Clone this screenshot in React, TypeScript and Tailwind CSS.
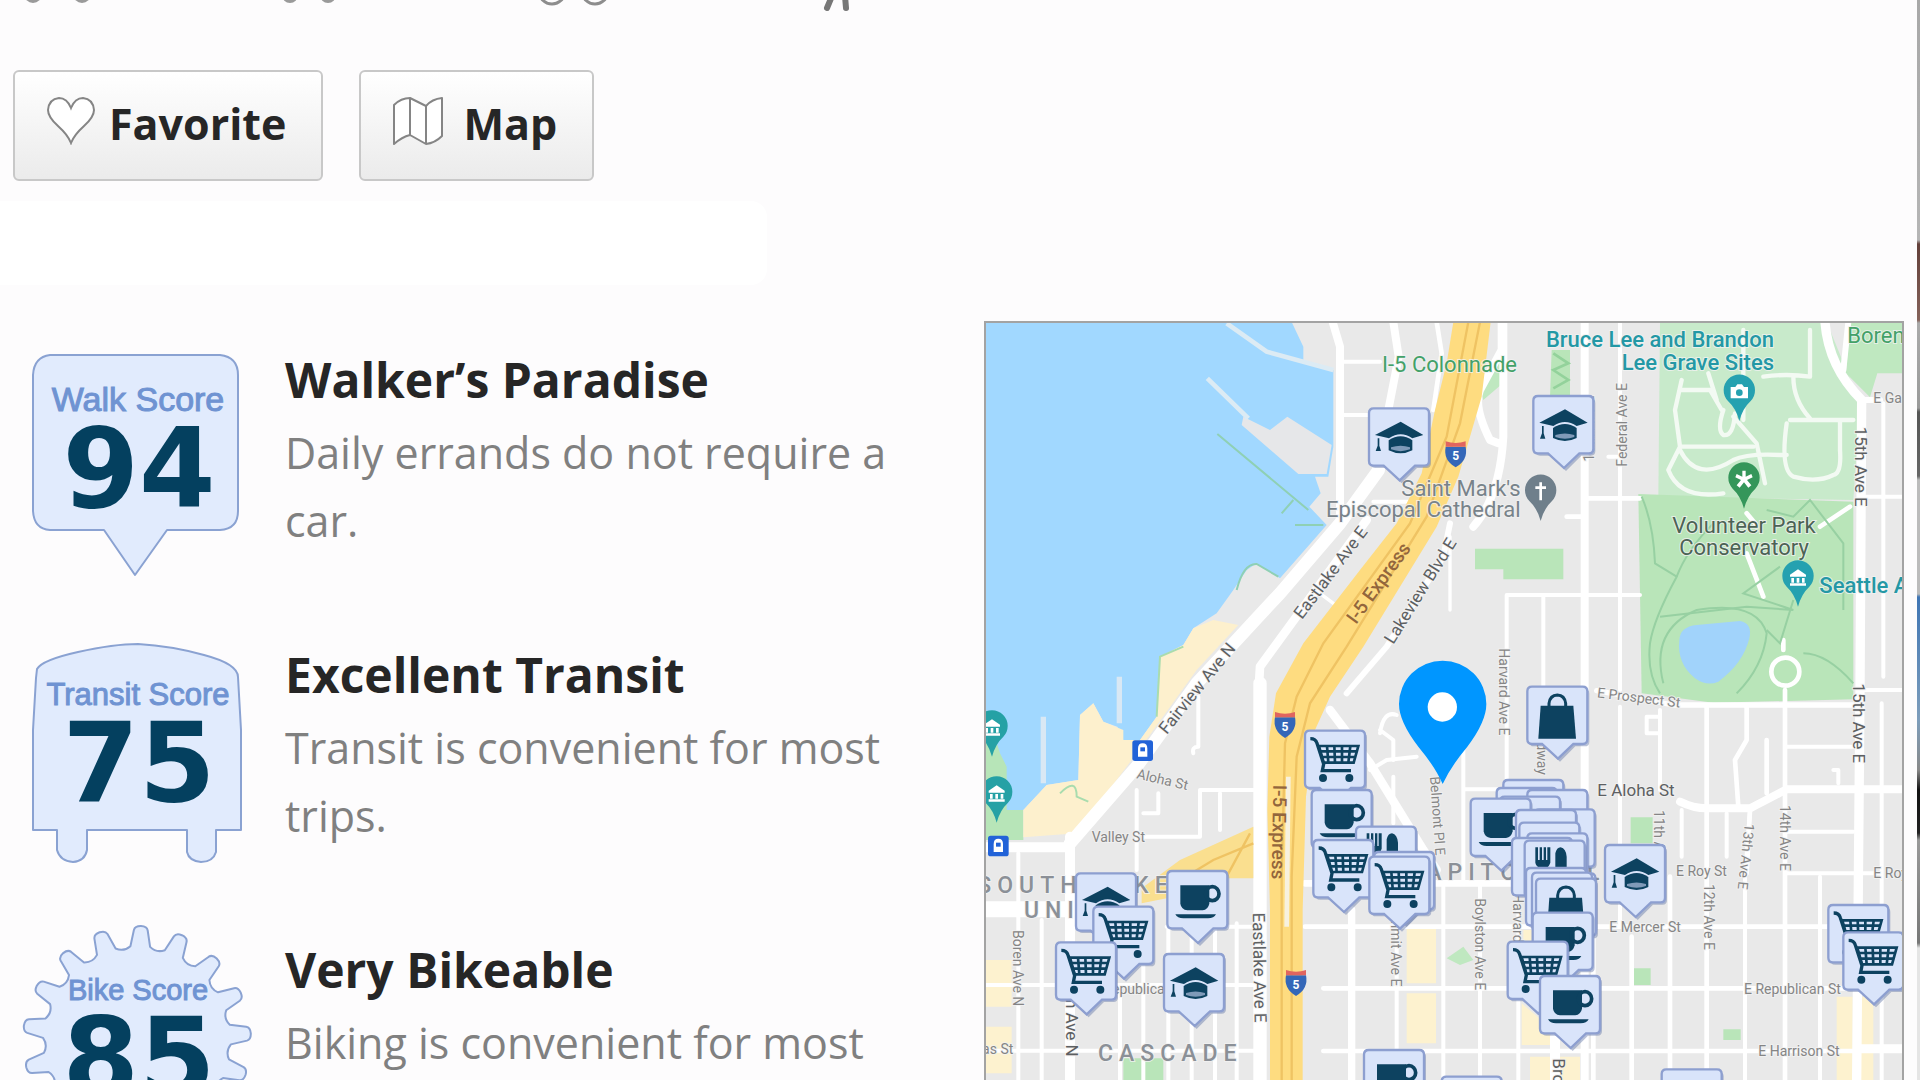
import type { ReactNode } from 'react';

type IconName = 'cap' | 'cart' | 'cup' | 'bag' | 'fork' | 'none';

interface Place {
  x: number;
  y: number;
  icon: IconName;
}

interface Label {
  text: string;
  x: number;
  y: number;
  rotate?: number;
  kind: 'street' | 'avenue' | 'place' | 'park' | 'teal' | 'church' | 'express';
  anchor?: 'start' | 'middle' | 'end';
}

// Map units: three to a pixel at the default width
const places: Place[] = [
  { x: 1167, y: 295, icon: 'cap' },
  { x: 1660, y: 258, icon: 'cap' },
  { x: 1642, y: 1130, icon: 'bag' },
  { x: 975, y: 1262, icon: 'cart' },
  { x: 995, y: 1440, icon: 'cup' },
  { x: 1128, y: 1550, icon: 'fork' },
  { x: 1000, y: 1590, icon: 'cart' },
  { x: 1182, y: 1626, icon: 'none' },
  { x: 1168, y: 1640, icon: 'cart' },
  { x: 288, y: 1690, icon: 'cap' },
  { x: 340, y: 1790, icon: 'cart' },
  { x: 228, y: 1897, icon: 'cart' },
  { x: 562, y: 1683, icon: 'cup' },
  { x: 552, y: 1932, icon: 'cap' },
  { x: 1570, y: 1410, icon: 'none' },
  { x: 1550, y: 1434, icon: 'none' },
  { x: 1642, y: 1440, icon: 'none' },
  { x: 1560, y: 1460, icon: 'none' },
  { x: 1664, y: 1498, icon: 'none' },
  { x: 1472, y: 1466, icon: 'cup' },
  { x: 1666, y: 1690, icon: 'none' },
  { x: 1608, y: 1500, icon: 'none' },
  { x: 1618, y: 1538, icon: 'none' },
  { x: 1642, y: 1570, icon: 'none' },
  { x: 1596, y: 1584, icon: 'none' },
  { x: 1634, y: 1592, icon: 'fork' },
  { x: 1638, y: 1674, icon: 'none' },
  { x: 1656, y: 1688, icon: 'none' },
  { x: 1668, y: 1706, icon: 'bag' },
  { x: 1658, y: 1808, icon: 'cup' },
  { x: 1583, y: 1895, icon: 'cart' },
  { x: 1680, y: 1998, icon: 'cup' },
  { x: 1875, y: 1605, icon: 'cap' },
  { x: 2545, y: 1785, icon: 'cart' },
  { x: 2590, y: 1867, icon: 'cart' },
  { x: 1152, y: 2220, icon: 'cup' },
  { x: 1385, y: 2300, icon: 'none' },
  { x: 2045, y: 2278, icon: 'none' },
];

const labels: Label[] = [
  { text: 'I-5 Colonnade', x: 1206, y: 185, kind: 'park' },
  { text: 'Bruce Lee and Brandon', x: 2382, y: 112, kind: 'teal', anchor: 'end' },
  { text: 'Lee Grave Sites', x: 2382, y: 180, kind: 'teal', anchor: 'end' },
  { text: 'Boren Park', x: 2602, y: 100, kind: 'park' },
  { text: "Saint Mark's", x: 1622, y: 557, kind: 'church', anchor: 'end' },
  { text: 'Episcopal Cathedral', x: 1622, y: 621, kind: 'church', anchor: 'end' },
  { text: 'Volunteer Park', x: 2292, y: 668, kind: 'place', anchor: 'middle' },
  { text: 'Conservatory', x: 2292, y: 735, kind: 'place', anchor: 'middle' },
  { text: 'Seattle Asian Art', x: 2518, y: 850, kind: 'teal' },
  { text: 'Eastlake Ave E', x: 966, y: 930, rotate: -53, kind: 'avenue' },
  { text: 'I-5 Express', x: 1128, y: 945, rotate: -54, kind: 'express' },
  { text: 'Lakeview Blvd E', x: 1240, y: 1005, rotate: -58, kind: 'avenue' },
  { text: 'Fairview Ave N', x: 560, y: 1275, rotate: -51, kind: 'avenue' },
  { text: 'I-5 Express', x: 880, y: 1424, rotate: 91, kind: 'express' },
  { text: 'Eastlake Ave E', x: 818, y: 1808, rotate: 89, kind: 'avenue' },
  { text: '9th Ave N', x: 258, y: 2240, rotate: 90, kind: 'avenue', anchor: 'end' },
  { text: 'Federal Ave E', x: 1940, y: 470, rotate: -90, kind: 'street' },
  { text: '10th Ave E', x: 1842, y: 455, rotate: -90, kind: 'street' },
  { text: '15th Ave E', x: 2625, y: 350, rotate: 90, kind: 'avenue' },
  { text: '15th Ave E', x: 2618, y: 1120, rotate: 90, kind: 'avenue' },
  { text: 'Harvard Ave E', x: 1558, y: 1015, rotate: 90, kind: 'street' },
  { text: 'Belmont Pl E', x: 1350, y: 1400, rotate: 86, kind: 'street' },
  { text: 'Broadway E', x: 1672, y: 1210, rotate: 90, kind: 'street' },
  { text: 'E Prospect St', x: 1850, y: 1162, rotate: 7, kind: 'street' },
  { text: 'E Aloha St', x: 1852, y: 1458, kind: 'avenue' },
  { text: 'Aloha St', x: 468, y: 1405, rotate: 13, kind: 'street' },
  { text: 'Valley St', x: 335, y: 1595, kind: 'street' },
  { text: 'Boren Ave N', x: 98, y: 1860, rotate: 90, kind: 'street' },
  { text: 'E Roy St', x: 2088, y: 1697, kind: 'street' },
  { text: 'E Mercer St', x: 1888, y: 1866, kind: 'street' },
  { text: 'E Republican St', x: 2292, y: 2052, kind: 'street' },
  { text: 'E Harrison St', x: 2335, y: 2238, kind: 'street' },
  { text: 'E Roy St', x: 2680, y: 1705, kind: 'street' },
  { text: 'E Garfield St', x: 2680, y: 280, kind: 'street' },
  { text: '11th Ave E', x: 2022, y: 1500, rotate: 90, kind: 'street' },
  { text: '12th Ave E', x: 2172, y: 1722, rotate: 90, kind: 'street' },
  { text: '13th Ave E', x: 2294, y: 1540, rotate: 96, kind: 'street' },
  { text: '14th Ave E', x: 2400, y: 1485, rotate: 90, kind: 'street' },
  { text: 'Boylston Ave E', x: 1485, y: 1765, rotate: 90, kind: 'street' },
  { text: 'Harvard Ave E', x: 1600, y: 1750, rotate: 90, kind: 'street' },
  { text: 'Summit Ave E', x: 1232, y: 1770, rotate: 90, kind: 'street' },
  { text: 'Republican St', x: 370, y: 2052, kind: 'street' },
  { text: 'Thomas St', x: 100, y: 2232, kind: 'street', anchor: 'end' },
  { text: 'Broadway', x: 1718, y: 2245, rotate: 90, kind: 'avenue' },
];

const labelClass = {
  street: 'fill-[#858585] text-[42px]',
  avenue: 'fill-[#5d6062] text-[51px]',
  place: 'fill-[#4c6355] text-[66px]',
  park: 'fill-[#43a168] text-[66px]',
  teal: 'fill-[#2498a5] text-[66px] font-medium',
  church: 'fill-[#78838a] text-[66px]',
  express: 'fill-[#93663c] text-[57px] font-medium',
};

// [path, width]
const roads: [string, number][] = [
  ['M1058 36L1080 110V640', 24],
  ['M1240 36L1256 140L1225 300', 24],
  ['M1370 36L1385 130L1360 300', 14],
  ['M1080 155H1200M1090 315H1165M1180 575H1310', 12],
  ['M1196 480L1080 640L900 850L830 925L650 1120L470 1370L270 1600', 38],
  ['M270 1580V2310M18 1612H270', 30],
  ['M18 1798H290', 48],
  ['M1160 630L920 960L840 1070L836 1140', 26],
  ['M840 1120V2310', 40],
  ['M1020 850L1060 880', 10],
  ['M1100 1150L1220 1010L1390 740L1410 640', 18],
  ['M1410 680V900', 10],
  ['M1050 1200L1170 1360L1330 1620L1370 1680', 26],
  ['M1170 1380L1220 1350L1310 1340M1240 1400V1540', 12],
  ['M1200 1270Q1210 1200 1250 1215M1200 1260L1240 1290V1350', 12],
  ['M1565 36V120L1500 240Q1480 290 1530 390L1555 400M1570 36V380Q1560 560 1480 650', 24],
  ['M1814 36V2310', 24],
  ['M1920 36V1140M1885 440H1930', 12],
  ['M1810 565H1980M1815 620H1760', 14],
  ['M1580 1140V855H1980M1690 855V1140', 12],
  ['M1580 1140V1440M1450 1250V1720M1455 1438H1560', 12],
  ['M2535 36Q2545 170 2645 270L2640 1140L2630 2310', 28],
  ['M2590 180L2605 36M2650 270H2700', 18],
  ['M2640 560H2772M2710 280V1100M2640 1140H2772', 12],
  ['M1850 1142L2080 1185H2620', 16],
  ['M1920 1190V1840M2040 1200V1440M2040 1270H2000V1220H2040', 12],
  ['M2180 1190V2310M2300 1190V1290L2265 1350L2275 1490M2360 1290V1450M2415 1140V2310', 14],
  ['M2420 1310H2620M2420 1565H2620M2420 1690H2700M2560 1380H2575V1420', 12],
  ['M2100 1475Q2140 1495 2180 1495H2310Q2340 1480 2420 1438H2772', 24],
  ['M2105 1500V1640M2240 1510V1640M2310 1500L2295 1700V2310', 12],
  ['M2705 1180V2310M2520 1700V2310', 12],
  ['M975 1720H1600', 20],
  ['M975 1850H2630M1030 2035H2600M1030 2223H2772', 14],
  ['M1115 1800V2310', 22],
  ['M1250 1850V2310M1390 1720V2310M1500 1730V2310M1615 1800V2310', 12],
  ['M1725 2180V2310', 30],
  ['M1840 1850V2310M1955 1880V2310M2070 1700V2310M2770 2210H2640', 14],
  ['M115 1630V2310M185 1830V2310M420 2030V2310M490 1860V2310M565 1850V2310M635 1850V2310M705 1850V2310M770 1840V2310', 12],
  ['M560 1850H840M18 2025H840M18 2222H840', 12],
  ['M470 1440V1680M660 1440V1580H490M660 1440H820M720 1450V1560M535 1450V1510H490', 12],
  ['M655 1160V1310M655 1310Q635 1310 640 1330', 12],
  ['M2300 1690L2310 1500', 14],
];

const cemeteryPaths =
  'M2105 210L2085 300L2100 410H2320M2100 240H2190L2225 300M2185 190L2210 270M2100 410L2065 480Q2100 570 2230 550M2100 420Q2150 520 2260 450Q2300 430 2400 435H2420M2420 340Q2400 480 2440 500Q2510 520 2560 495Q2585 490 2580 420V330M2430 330H2620M2290 60V330M2490 60V200Q2420 190 2350 200M2440 200Q2440 270 2490 325M2260 320L2330 400L2355 520M2230 300Q2210 360 2230 375Q2260 380 2265 310';

function PlaceIcon({ icon }: { icon: IconName }) {
  switch (icon) {
    case 'cap':
      return (
        <g fill="#0d4260">
          <path d="M18 80L95 40L163 80L130 90Q95 66 60 90Z" />
          <path d="M59 96Q95 72 130 96V126Q95 144 59 126Z" />
          <path d="M66 117Q95 108 123 117V123Q95 134 66 123Z" fill="#7f9ab8" />
          <path d="M26 90H31V112L36 128H20L26 112Z" />
        </g>
      );
    case 'cart':
      return (
        <g fill="none" stroke="#0d4260" strokeWidth="8">
          <path d="M16 24Q32 24 36 38L56 100L52 120H138" strokeWidth="10" />
          <path d="M42 46H160L146 96H56Z" />
          <path d="M46 62H156M51 79H151M66 46L70 96M88 46L90 96M111 46V96M136 46L130 96" />
          <circle cx="54" cy="142" r="8" fill="#0d4260" />
          <circle cx="133" cy="142" r="8" fill="#0d4260" />
        </g>
      );
    case 'cup':
      return (
        <g fill="#0d4260">
          <path d="M39 43H126V98Q122 116 106 118H60Q42 116 39 98Z" />
          <ellipse cx="135" cy="68" rx="20" ry="21" fill="none" stroke="#0d4260" strokeWidth="11" />
          <path d="M24 130H146Q140 142 122 142H48Q30 142 24 130Z" />
        </g>
      );
    case 'bag':
      return (
        <g fill="#0d4260">
          <path d="M40 57H138L146 156H33Z" />
          <path d="M65 62V50Q68 26 90 25Q112 26 115 50V62" fill="none" stroke="#0d4260" strokeWidth="9" />
        </g>
      );
    case 'fork':
      return (
        <g fill="#0d4260">
          <path d="M32 20H40V58H45V20H52V58H57V20H64V58H68V20H77V66Q72 80 63 82V150H47V82Q34 78 32 66Z" />
          <path d="M92 92V38Q96 20 108 20Q124 24 126 48V150H108V92Z" />
        </g>
      );
    default:
      return null;
  }
}

function PlaceMarker({ x, y, icon }: Place) {
  return (
    <g transform={`translate(${x} ${y})`}>
      <path
        d="M14 0H166Q180 0 180 14V158Q180 172 166 172H138L92 218L44 172H14Q0 172 0 158V14Q0 0 14 0Z"
        fill="#6478a8"
        opacity="0.45"
        transform="translate(6 7)"
      />
      <path
        d="M14 0H166Q180 0 180 14V158Q180 172 166 172H138L92 216L44 172H14Q0 172 0 158V14Q0 0 14 0Z"
        fill="#d9e4fa"
        stroke="#8d9fd0"
        strokeWidth="7"
      />
      <PlaceIcon icon={icon} />
    </g>
  );
}

function PoiPin({ x, y, color, children }: { x: number; y: number; color: string; children: ReactNode }) {
  return (
    <g transform={`translate(${x} ${y})`}>
      <path d="M0 88Q-10 50 -34 28A47 47 0 1 1 34 28Q10 50 0 88Z" fill={color} />
      <g fill="#fff" stroke="none">
        {children}
      </g>
    </g>
  );
}

function Shield({ x, y }: { x: number; y: number }) {
  return (
    <g transform={`translate(${x} ${y})`}>
      <path d="M-30 -18H30Q38 22 0 44Q-38 22 -30 -18Z" fill="#3467b8" />
      <path d="M-30 -34Q0 -24 30 -34V-18H-30Z" fill="#e0655f" />
      <text x="0" y="22" textAnchor="middle" className="fill-white text-[36px] font-bold">
        5
      </text>
    </g>
  );
}

function Station({ x, y }: { x: number; y: number }) {
  return (
    <g transform={`translate(${x} ${y})`}>
      <rect x="-31" y="-31" width="62" height="62" rx="8" fill="#2263d8" />
      <path d="M-14 18V-6Q-14 -22 0 -22Q14 -22 14 -6V18Z" fill="#fff" />
      <rect x="-7" y="-10" width="14" height="12" fill="#2263d8" />
    </g>
  );
}

const museum = <path d="M-24 -8L0 -24L24 -8V-2H-24ZM-20 2H-12V16H-20ZM-4 2H4V16H-4ZM12 2H20V16H12ZM-24 18H24V25H-24Z" />;

function NeighborhoodMap() {
  return (
    <svg viewBox="18 39 2748 2271" className="block w-full font-[Roboto,sans-serif]" role="img" aria-label="Map">
      <rect x="18" y="39" width="2748" height="2271" fill="#e9e9e9" />

      {/* Lake Union */}
      <path
        d="M18 36H935L970 110V150L1060 180V410L1045 500H1005L1022 550L988 590L1040 645L900 805L830 760L800 780L760 840L710 910L640 955L610 1005L540 1040L530 1220L480 1290H430L412 1250L370 1235L340 1180L300 1215L295 1410L200 1425L130 1500H18Z"
        fill="#a1d8ff"
      />
      <path d="M790 320L870 360L922 320L1055 405L1040 492H955L785 345Z" fill="#e6e7e9" />
      <path d="M740 40L860 125L1060 180M682 205L805 325" fill="none" stroke="#dcebf4" strokeWidth="14" />
      <path d="M712 372L985 600M905 610L940 570M945 645H1030M770 840Q790 760 830 762L895 800" fill="none" stroke="#8fd0b4" strokeWidth="6" />
      <path d="M18 1200L60 1330L80 1370V1500L130 1500V1590H18Z" fill="#b7e5b8" />
      <path
        d="M540 1040L610 1005L640 955L700 930L775 945L650 1080L470 1330L290 1570L130 1582V1500L200 1425L295 1410L300 1215L340 1180L370 1235L430 1260L430 1290H480L530 1220Z"
        fill="#fdf0cd"
      />
      <path d="M418 1100V1240M190 1220V1420" stroke="#d9e8f4" strokeWidth="16" />
      <path d="M240 1450Q290 1400 290 1460L325 1475M530 1220L540 1040L610 1010" fill="none" stroke="#a9dcae" strokeWidth="6" />

      {/* Parks */}
      <path d="M2040 36H2540L2640 280L2620 570L2035 560Z" fill="#c8eacb" />
      <path d="M1975 552L2620 575V1168L2200 1178L1985 1150Z" fill="#b9e5b9" />
      <path d="M2610 36H2772V190H2692L2670 262L2598 190Z" fill="#bfe8c0" />
      <path d="M1715 120H1770V262H1710ZM1485 716H1750V808H1570V778H1485ZM1952 1522H2018V1600H1952ZM1962 1975H2012V2025H1962ZM2230 2158H2282V2190H2230ZM430 2245H550V2310H430Z" fill="#b9e5b9" />
      <path d="M1500 240L1580 90V210L1510 270ZM1400 1945L1450 1910L1480 1950L1440 1965Z" fill="#bfe8c0" />
      <path d="M1720 130L1765 160L1720 180L1765 210L1720 235" fill="none" stroke="#93d29b" strokeWidth="8" />

      {/* Commercial blocks */}
      <path
        d="M1280 1850H1368V2020H1280ZM1280 2050H1368V2200H1280ZM2570 2060H2618V2310H2570ZM2642 2060H2680V2310H2642ZM1625 2080L1720 2160V2205H1625ZM1650 2240H1800V2310H1650ZM18 1950H95V2090H18ZM18 2150H95V2290H18ZM1630 1860H1700V2000H1630Z"
        fill="#fdf2cf"
      />

      <g fill="none" stroke="#fff" strokeLinecap="round" strokeLinejoin="round">
        {roads.map(([d, width]) => (
          <path key={d} d={d} strokeWidth={width} />
        ))}
        <path d={cemeteryPaths} stroke="#f3faf3" strokeWidth="13" />
        <path d="M2300 730L2350 860M2410 1020V990M2520 650L2610 590M2300 610L2325 640" strokeWidth="14" />
        <circle cx="2416" cy="1085" r="42" strokeWidth="14" />
      </g>

      {/* Volunteer Park trails and reservoir */}
      <g fill="none" stroke="#97d0a2" strokeWidth="6">
        <path d="M1985 560Q2020 640 2025 760L2090 800Q2020 930 2010 1000Q2000 1090 2040 1150" />
        <path d="M2090 800Q2120 720 2200 640M2040 920L2300 890L2440 900L2290 850L2400 770" />
        <path d="M2050 1120Q2010 960 2150 900Q2330 870 2360 970Q2350 1070 2270 1150" />
        <path d="M2360 960L2400 1000L2440 870M2470 1030Q2540 1030 2620 1120M2360 600L2440 620L2490 570L2590 700V900" />
      </g>
      <path d="M2098 990Q2100 950 2150 945L2280 933Q2318 940 2308 985Q2290 1060 2215 1115Q2180 1130 2145 1105Q2090 1060 2098 990Z" fill="#a1d3fb" />

      {/* I-5 */}
      <path
        d="M1420 36H1532L1505 260L1435 500L1370 650L1150 1010L1050 1160L1005 1260L978 1460L968 1800V2310H870V1800L862 1500L868 1280L888 1150L970 1000L1140 780L1250 640L1325 490L1365 300L1400 160Z"
        fill="#fedc80"
      />
      <path d="M820 1550L600 1650L485 1735V1780L560 1765L720 1705L820 1705Z" fill="#fadf8f" />
      <path
        d="M1465 36L1400 380L1290 640L1030 1000L950 1160L915 1300L905 1700V2310M1500 36L1440 340L1340 620L1100 1010L990 1180L950 1340L935 1700V2310M820 1600L700 1650L560 1735M810 1570L740 1700"
        fill="none"
        stroke="#efc363"
        strokeWidth="7"
      />
      <path d="M925 1400L920 1850" stroke="#f7f1df" strokeWidth="14" />

      <g paintOrder="stroke" stroke="#f2f2f2" strokeOpacity="0.8" strokeWidth="6">
        {labels.map((l, i) => (
          <text
            key={i}
            x={l.x}
            y={l.y}
            textAnchor={l.anchor}
            transform={l.rotate ? `rotate(${l.rotate} ${l.x} ${l.y})` : undefined}
            className={labelClass[l.kind]}
            strokeWidth={l.kind === 'express' ? 0 : 6}
          >
            {l.text}
          </text>
        ))}
        <g className="fill-[#8b9097] text-[69px] font-medium tracking-[18px]">
          <text x="-8" y="1750">SOUTH LAKE</text>
          <text x="132" y="1823">UNION</text>
          <text x="354" y="2252">CASCADE</text>
          <text x="1276" y="1710">CAPITOL HILL</text>
        </g>
      </g>

      <Shield x={1427} y={428} />
      <Shield x={915} y={1240} />
      <Shield x={948} y={2014} />
      <Station x={488} y={1322} />
      <Station x={55} y={1608} />

      <PoiPin x={2278} y={245} color="#25a1b0">
        <path d="M-26 -14H-12L-6 -22H8L14 -14H26V20H-26Z" />
        <circle cx="0" cy="3" r="10" fill="#25a1b0" />
      </PoiPin>
      <PoiPin x={2454} y={802} color="#25a1b0">{museum}</PoiPin>
      <PoiPin x={36} y={1252} color="#25a1a5">{museum}</PoiPin>
      <PoiPin x={50} y={1450} color="#25a1a5">{museum}</PoiPin>
      <PoiPin x={2292} y={508} color="#35965a">
        <path d="M-5 -26H5V-8L22 -16L26 -6L9 2L22 18L13 25L0 9L-13 25L-22 18L-9 2L-26 -6L-22 -16L-5 -8Z" />
      </PoiPin>
      <PoiPin x={1682} y={545} color="#6f7f8b">
        <path d="M-4 -28H4V-16H16V-8H4V26H-4V-8H-16V-16H-4Z" />
      </PoiPin>

      {places.map((p) => (
        <PlaceMarker key={`${p.x}-${p.y}`} {...p} />
      ))}

      {/* Home location */}
      <path d="M1388 1422Q1365 1370 1315 1310Q1257 1235 1257 1182A131 130 0 0 1 1519 1182Q1519 1235 1462 1310Q1412 1370 1388 1422Z" fill="#0096ff" />
      <circle cx="1387" cy="1191" r="44" fill="#fff" />
    </svg>
  );
}

function gearPath(cx: number, cy: number, outer: number, inner: number, teeth: number) {
  const at = (r: number, deg: number) => {
    const a = ((deg - 90) * Math.PI) / 180;
    return `${(cx + r * Math.cos(a)).toFixed(1)} ${(cy + r * Math.sin(a)).toFixed(1)}`;
  };
  const step = 360 / teeth;
  let d = '';
  for (let i = 0; i < teeth; i++) {
    const c = i * step + 2;
    d += `${i ? 'L' : 'M'}${at(inner + 2, c - 6)}L${at(outer - 4, c - 3.6)}Q${at(outer, c - 3)} ${at(outer, c)}`;
    d += `Q${at(outer, c + 3)} ${at(outer - 4, c + 3.6)}L${at(inner + 2, c + 6)}`;
    d += `Q${at(inner - 3, c + step / 2)} ${at(inner + 2, c + step - 6)}`;
  }
  return d + 'Z';
}

const scores = [
  {
    name: 'Walk Score',
    nameClass: 'text-[34px]',
    nameY: 76,
    value: 94,
    valueY: 172,
    shape: 'M28 20H198Q216 22 216 40V176Q216 194 198 195H145L113 240L82 195H28Q12 194 11 176V40Q12 22 28 20Z',
    title: 'Walker’s Paradise',
    text: 'Daily errands do not require a car.',
  },
  {
    name: 'Transit Score',
    nameClass: 'text-[31px]',
    nameY: 75,
    value: 75,
    valueY: 171,
    shape:
      'M15 39Q20 30 56 22Q92 14 116 14Q150 16 182 25Q216 34 216 47L219 100V200H194V222Q191 232 179 232Q167 231 165 222V200H65V220Q63 231 51 232Q38 231 35 220V200H11V100L14 48Z',
    title: 'Excellent Transit',
    text: 'Transit is convenient for most trips.',
  },
  {
    name: 'Bike Score',
    nameClass: 'text-[29px]',
    nameY: 75,
    value: 85,
    valueY: 171,
    shape: gearPath(115, 115, 114, 92, 17),
    title: 'Very Bikeable',
    text: 'Biking is convenient for most trips.',
  },
];

export default function App() {
  return (
    <div className="flex h-screen overflow-hidden bg-[#fdfcfd] font-['Open_Sans',sans-serif] text-[#262626]">
      <div className="min-w-0 flex-1">
        {/* Commute summary: car, bus, bike, on foot */}
        <svg viewBox="0 0 1000 12" className="block h-3 w-[1000px]" fill="#9a9a9a" aria-hidden="true">
          <circle cx="33" cy="-6" r="9" />
          <circle cx="82" cy="-6" r="9" />
          <circle cx="290" cy="-5" r="8" />
          <circle cx="328" cy="-5" r="8" />
          <g fill="none" stroke="#8d8d8d" strokeWidth="3">
            <circle cx="552" cy="-9" r="13" />
            <circle cx="595" cy="-9" r="13" />
            <path d="M832 -4L827 8M845 -4L846 8" strokeWidth="6" strokeLinecap="round" stroke="#777" />
          </g>
        </svg>

        <div className="mt-[58px] flex gap-9 pl-[13px]">
          <button className="flex h-[111px] items-center gap-[14px] rounded-md border-2 border-[#c8c8c8] bg-linear-to-b from-white to-[#ebebeb] pr-[35px] pb-[2px] pl-8 text-[43px] font-bold">
            <svg viewBox="0 0 48 48" className="mb-2 h-12 w-12" fill="#fff" stroke="#858585" strokeWidth="2" aria-hidden="true">
              <path d="M24 46Q21 38 11 29Q1 20 1 13Q2 2 12 1Q20 1 24 11Q28 1 36 1Q46 2 47 13Q47 20 37 29Q27 38 24 46Z" />
            </svg>
            Favorite
          </button>
          <button className="flex h-[111px] items-center gap-5 rounded-md border-2 border-[#c8c8c8] bg-linear-to-b from-white to-[#ebebeb] pr-[35px] pb-[2px] pl-8 text-[43px] font-bold">
            <svg viewBox="0 0 50 48" className="mb-2 h-12 w-[50px]" fill="#fff" stroke="#858585" strokeWidth="2" strokeLinejoin="round" aria-hidden="true">
              <path d="M1 8Q8 1 17 1L33 9Q39 2 49 1V39Q42 46 33 47L17 38Q9 40 1 47ZM17 1V38M33 9V47" />
            </svg>
            Map
          </button>
        </div>

        <div className="mt-5 h-[84px] w-2/5 rounded-r-2xl bg-white" />

        <main className="mt-9 grid grid-cols-[123fr_115fr] items-start pr-[13px]">
          <div className="flex flex-col pt-[14px] pl-[22px]">
            {scores.map((s) => (
              <section key={s.name} className="flex h-[295px] gap-8 pr-10">
                <svg viewBox="0 0 231 246" className="h-[246px] w-[231px] shrink-0" role="img">
                  <path d={s.shape} fill="#e1ebfd" stroke="#8aa2d2" strokeWidth="2" strokeLinejoin="round" />
                  <text
                    x="116"
                    y={s.nameY}
                    textAnchor="middle"
                    stroke="#6f93d2"
                    className={`fill-[#6f93d2] font-['Liberation_Sans',sans-serif] ${s.nameClass}`}
                  >
                    {s.name}
                  </text>
                  <text
                    x="117"
                    y={s.valueY}
                    textAnchor="middle"
                    className="fill-[#04405f] font-['DejaVu_Sans',sans-serif] text-[110px] font-bold"
                  >
                    {s.value}
                  </text>
                </svg>
                <div className="pt-2">
                  <h2 className="text-[48px] leading-[74px] font-bold">{s.title}</h2>
                  <p className="mt-[2px] text-[43px] leading-[68px] text-[#808080]">{s.text}</p>
                </div>
              </section>
            ))}
          </div>

          <div className="border-2 border-[#a3a3a3]">
            <NeighborhoodMap />
          </div>
        </main>
      </div>

      {/* Edge of the photo column */}
      <div className="w-[3px] bg-[linear-gradient(#a8a8a8_0,#b5b5b5_240px,#63403a_244px,#85625a_320px,#aaa_323px,#999_408px,#555_412px,#666_476px,#bbb_480px,#bbb_594px,#3f75b4_597px,#7d9dbb_720px,#888_770px,#111_790px,#222_833px,#999_840px,#777_943px,#e5e5e5_948px)]" />
    </div>
  );
}
